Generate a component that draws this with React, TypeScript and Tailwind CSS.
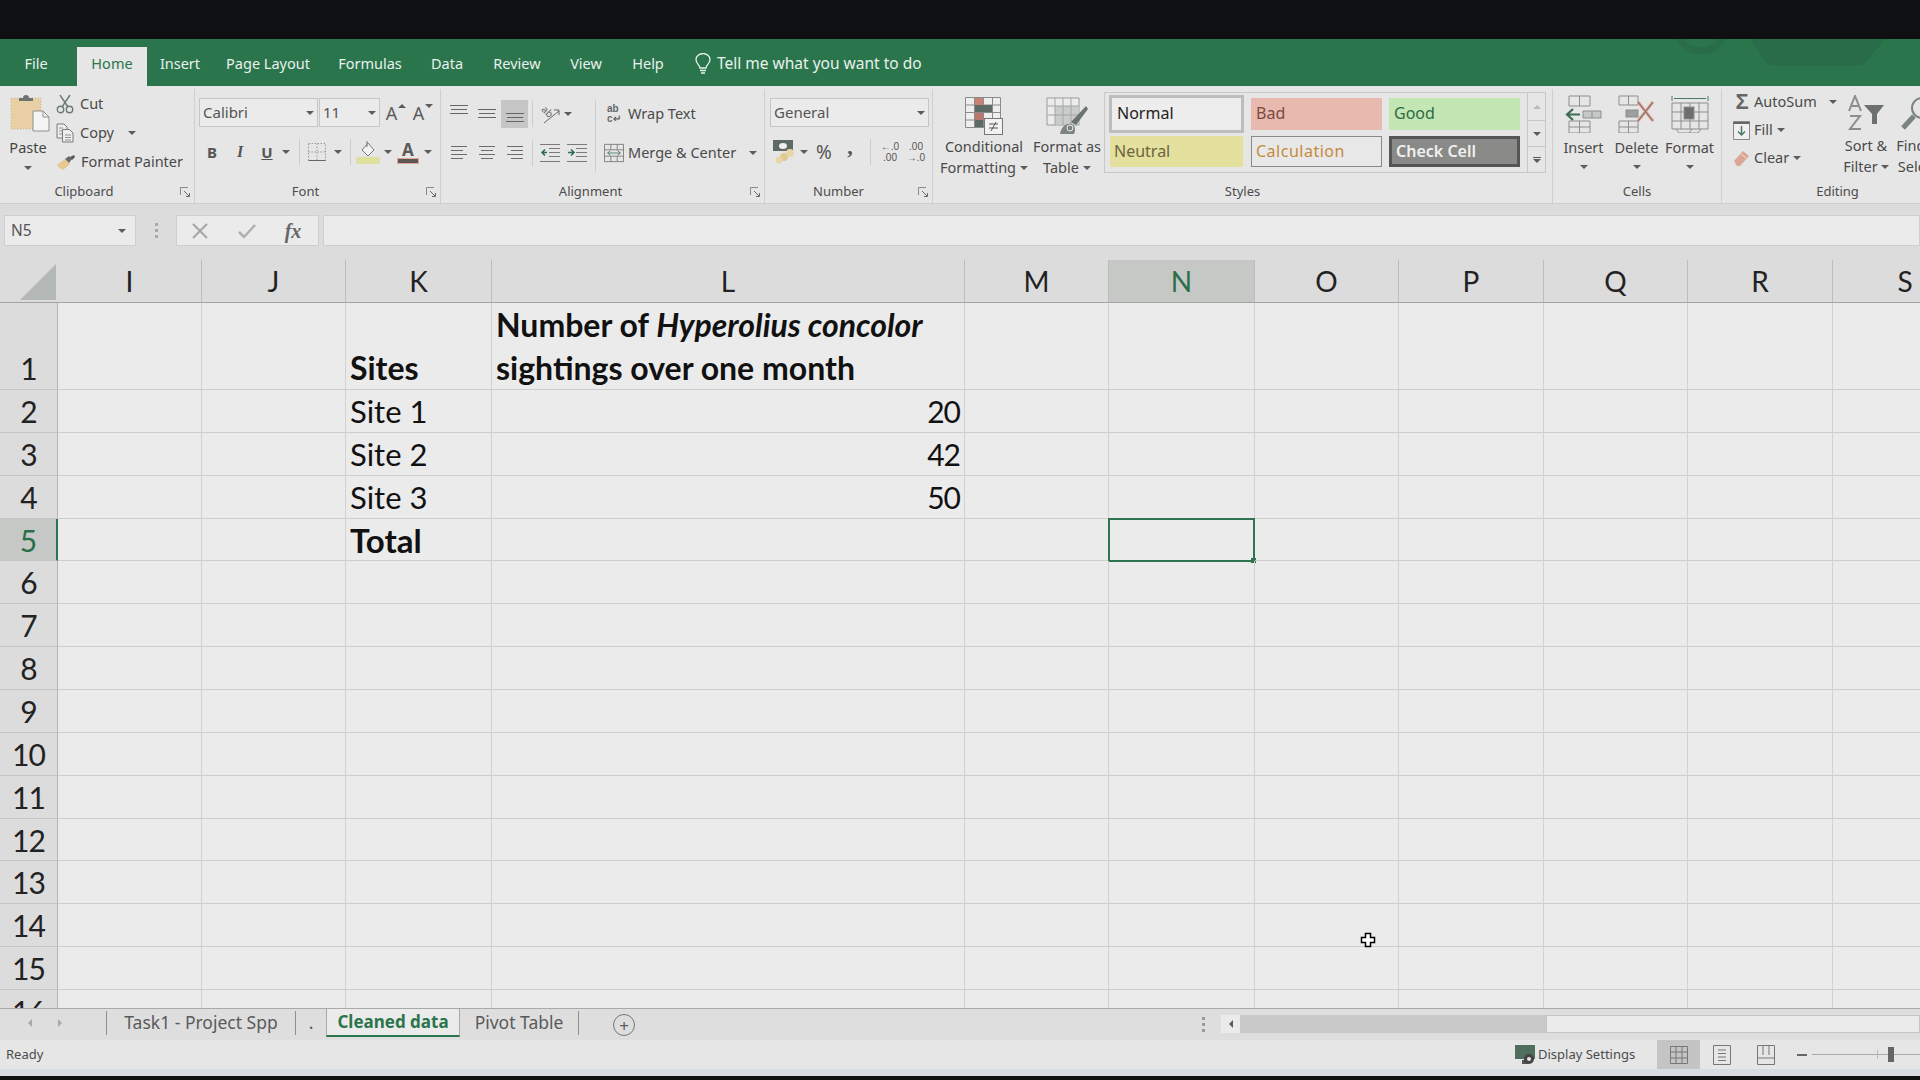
import { ReactNode } from "react";

const COLS = ["I", "J", "K", "L", "M", "N", "O", "P", "Q", "R", "S"];
const ROWS = Array.from({ length: 16 }, (_, i) => i + 1);
const TABS = [
  { name: "File", cls: "w-[77px] pr-[5px]" },
  { name: "Home", cls: "w-[70px]" },
  { name: "Insert", cls: "w-[66px]" },
  { name: "Page Layout", cls: "w-[110px]" },
  { name: "Formulas", cls: "w-[94px]" },
  { name: "Data", cls: "w-[60px]" },
  { name: "Review", cls: "w-[80px]" },
  { name: "View", cls: "w-[58px]" },
  { name: "Help", cls: "w-[66px]" },
];

function Caret({ className = "" }: { className?: string }) {
  return (
    <svg width="8" height="4" viewBox="0 0 8 4" className={className}>
      <path d="M0 0h8L4 4z" fill="#5c5c5c" />
    </svg>
  );
}

function Launcher() {
  return (
    <svg width="11" height="11" viewBox="0 0 11 11" fill="none" stroke="#8a8a8a" strokeWidth="1">
      <path d="M.5 8V.5H8" />
      <path d="M4 4l5 5M6 9.5h3.5V6" stroke="#6a6a6a" />
    </svg>
  );
}

function Sep({ className = "bg-[#cdcdcd]" }: { className?: string }) {
  return <div className={`h-[26px] w-px ${className}`} />;
}

function TabSep() {
  return <div className="mt-[2px] h-[24px] w-px bg-[#8f8f8f]" />;
}

function Group({ label, className, launcher, children }: { label: string; className: string; launcher?: string; children: ReactNode }) {
  return (
    <div className={`flex shrink-0 flex-col border-r border-[#cfcfcf] ${className}`}>
      <div className="h-[93px]">{children}</div>
      <div className="flex h-[20px] items-center text-[13px] text-[#4c4c4c]">
        <span className="flex-1 text-center">{label}</span>
        {launcher && (
          <div className={`flex justify-end pr-[3px] ${launcher}`}>
            <Launcher />
          </div>
        )}
      </div>
    </div>
  );
}

function PasteIcon() {
  return (
    <svg width="40" height="38" viewBox="0 0 40 38">
      <rect x="1" y="4" width="30" height="31" fill="#e8cfa4" stroke="#c9b68f" strokeDasharray="1 2" />
      <path d="M9 7V4h4a3 3 0 0 1 6 0h4v3z" fill="#6f7272" />
      <path d="M23 17h10l6 6v14H23z" fill="#f4f4f4" stroke="#8f8f8f" />
      <path d="M33 17v6h6" fill="none" stroke="#8f8f8f" />
    </svg>
  );
}

function ScissorsIcon() {
  return (
    <svg width="18" height="20" viewBox="0 0 18 20" fill="none" stroke="#6b7a72" strokeWidth="1.4">
      <path d="M4 1l8 12M14 1L6 13" />
      <circle cx="4.5" cy="15.5" r="3.2" />
      <circle cx="13.5" cy="15.5" r="3.2" />
    </svg>
  );
}

function CopyIcon() {
  return (
    <svg width="18" height="20" viewBox="0 0 18 20" fill="#eeeeee" stroke="#7a7a7a">
      <path d="M1 1h7l3 3v11H1z" />
      <path d="M6.5 6.5h7l3.5 3.5v9H6.500z" />
      <path d="M3 5h4M3 8h3M3 11h3M9 12h6M9 14.500h6M9 17h6" fill="none" strokeWidth=".8" />
    </svg>
  );
}

function BrushIcon() {
  return (
    <svg width="20" height="17" viewBox="0 0 20 17">
      <path d="M1 11l8-6 5 5-7 6-2-2-1 1z" fill="#e6c88e" />
      <path d="M9 5l4-3 3 3-3 4z" fill="#6a6a6a" />
      <path d="M14 3l4-2 1 2-3 3z" fill="#555" />
    </svg>
  );
}

function AlignLines({ align }: { align: "l" | "c" | "r" }) {
  const widths = [16, 12, 16, 12];
  return (
    <svg width="18" height="14" viewBox="0 0 18 14" stroke="#6c6c6c" strokeWidth="1">
      {widths.map((w, i) => {
        const x = align === "l" ? 1 : align === "r" ? 17 - w : 9 - w / 2;
        return <line key={i} x1={x} x2={x + w} y1={i * 4 + 0.5} y2={i * 4 + 0.5} />;
      })}
    </svg>
  );
}

function VAlign({ y }: { y: number }) {
  return (
    <svg width="20" height="22" viewBox="0 0 20 22" stroke="#666" strokeWidth="1">
      {[0, 1, 2].map((i) => (
        <line key={i} x1={i === 1 ? 2 : 1} x2={i === 1 ? 18 : 19} y1={y + i * 4 + 0.5} y2={y + i * 4 + 0.5} />
      ))}
    </svg>
  );
}

function Indent({ right }: { right?: boolean }) {
  return (
    <svg width="20" height="20" viewBox="0 0 20 20" fill="none" stroke="#7a7a7a">
      <path d="M0 1.500h20M9 5.500h11M9 9.500h11M9 13.500h11M0 18.500h20" />
      {right ? (
        <path d="M1 9.500h5M4 6.500l3 3-3 3" stroke="#2f6f4f" strokeWidth="1.6" />
      ) : (
        <path d="M7 9.500H2M5 6.500l-3 3 3 3" stroke="#2f6f4f" strokeWidth="1.6" />
      )}
    </svg>
  );
}

function CondIcon() {
  return (
    <svg width="38" height="38" viewBox="0 0 38 38">
      <path d="M.5.5h35v30H.5zM.5 8h35M.5 15.500h35M.5 23h20M9.500.5v30M18.500.5v30M27.500.5v22" fill="#eeeeee" stroke="#8b8b8b" />
      <rect x="10" y="1" width="8" height="7" fill="#c97f74" />
      <rect x="10" y="8" width="17" height="7" fill="#5d6b64" />
      <rect x="10" y="16" width="8" height="7" fill="#b9776c" />
      <rect x="10" y="23" width="8" height="7" fill="#5d6b64" />
      <rect x="19.500" y="21.500" width="18" height="16" fill="#f2f2f2" stroke="#777" />
      <path d="M24 27h9M24 31h9M31 25l-5 9" stroke="#555" fill="none" />
    </svg>
  );
}

function TableIcon() {
  return (
    <svg width="42" height="38" viewBox="0 0 42 38">
      <path d="M1 1h32v27H1z" fill="#ececec" stroke="#9a9a9a" />
      <rect x="9" y="9" width="24" height="18" fill="#c9cccb" />
      <path d="M9 1v27M17 1v27M25 1v27M1 9h32M1 18h32" stroke="#a5a5a5" fill="none" />
      <path d="M40 9l2 3-12 16-5-3z" fill="#6b7370" />
      <path d="M14 37c1-7 6-11 11-10 4 1 5 5 3 10z" fill="#7d8582" />
      <circle cx="24" cy="31" r="3" fill="none" stroke="#eee" />
    </svg>
  );
}

function InsertIcon() {
  return (
    <svg width="38" height="38" viewBox="0 0 38 38" fill="none" stroke="#8d8d8d">
      <path d="M4 1h21v10H4zM14.500 1v10M4 26h21v12H4zM4 32h21M14.500 26v12" />
      <path d="M18 16h18v7H18zM27 16v7" fill="#c4c8c6" />
      <path d="M15 19.500H2M8 14l-6 5.500L8 25" stroke="#3d6e55" strokeWidth="2.200" />
    </svg>
  );
}

function DeleteIcon() {
  return (
    <svg width="38" height="38" viewBox="0 0 38 38" fill="none" stroke="#8d8d8d">
      <path d="M1 1h19v9H1zM10.500 1v9M1 26h19v12H1zM1 32h19M10.500 26v12" />
      <rect x="8" y="15" width="12" height="7" fill="#9aa09d" />
      <path d="M20 7l15 19M35 7L20 26" stroke="#e0a294" strokeWidth="3" />
      <path d="M20 7l15 19M35 7L20 26" stroke="#666" strokeWidth="1" />
    </svg>
  );
}

function FormatIcon() {
  return (
    <svg width="38" height="38" viewBox="0 0 38 38" fill="none" stroke="#8d8d8d">
      <path d="M1 1v5M37 1v5M3 3.500h32" stroke="#4d7a63" />
      <path d="M1 8h36v26H1zM1 17h36M1 26h36M10 8v26M28 8v26M19 8v26" />
      <rect x="13" y="12" width="10" height="12" fill="#6c6f6e" />
      <path d="M5 34l3 4h10l3-4M18 38h9l3-4" />
    </svg>
  );
}

function SortIcon() {
  return (
    <svg width="38" height="36" viewBox="0 0 38 36" fill="none">
      <path d="M2 16L8 1l6 15M4 11h8" stroke="#8d8d8d" strokeWidth="2" />
      <path d="M3 21h10L3 34h11" stroke="#8d8d8d" strokeWidth="2" />
      <path d="M17 10h20l-7 9v10h-5V19z" fill="#6c716e" />
    </svg>
  );
}

function Cursor() {
  return (
    <svg width="16" height="16" viewBox="0 0 16 16" className="absolute left-[1360px] top-[932px]">
      <path d="M5.500 1.500h5v4h4v5h-4v4h-5v-4h-4v-5h4z" fill="#fff" stroke="#000" strokeWidth="1.500" />
    </svg>
  );
}

function StyleCell({ className, children }: { className: string; children: string }) {
  return <div className={`flex items-center pb-[2px] text-[16px] ${className}`}>{children}</div>;
}

function Ribbon() {
  return (
    <div className="flex h-[117px] shrink-0 overflow-hidden bg-[#e6e6e6] pt-[3px]">
      <Group label="Clipboard" launcher="w-[26px]" className="w-[195px]">
        <div className="flex">
          <div className="flex w-[56px] flex-col items-center pt-[5px]">
            <div className="pl-[3px]"><PasteIcon /></div>
            <span className="mt-[6px] text-[14.5px] leading-[18px] text-[#444]">Paste</span>
            <Caret className="mt-[10px]" />
          </div>
          <div className="flex flex-col text-[14.5px] text-[#4a4a4a]">
            <div className="flex h-[29px] items-center gap-[6px]"><ScissorsIcon /><span>Cut</span></div>
            <div className="flex h-[29px] items-center gap-[6px]"><CopyIcon /><span>Copy</span><Caret className="ml-[8px]" /></div>
            <div className="flex h-[30px] items-center gap-[5px]"><BrushIcon /><span>Format Painter</span></div>
          </div>
        </div>
      </Group>

      <Group label="Font" launcher="w-[24px]" className="w-[246px]">
        <div className="flex flex-col pl-[4px] pt-[9px]">
          <div className="flex h-[29px] items-center">
            <div className="flex h-full w-[119px] items-center justify-between border border-[#c6c6c6] bg-[#ebebeb] pl-[3px] pr-[3px] text-[15px] text-[#555]">Calibri<Caret /></div>
            <div className="ml-px flex h-full w-[61px] items-center justify-between border border-[#c6c6c6] bg-[#ebebeb] pl-[3px] pr-[3px] text-[15px] text-[#555]">11<Caret /></div>
            <div className="ml-[2px] flex w-[28px] justify-center gap-[1px] text-[18px] leading-[20px] text-[#5c5c5c]">A<Caret className="mt-[1px] rotate-180" /></div>
            <div className="flex w-[26px] justify-center gap-[1px] text-[18px] leading-[20px] text-[#5c5c5c]">A<Caret className="mt-[1px]" /></div>
          </div>
          <div className="mt-[10px] flex h-[30px] items-center text-[#555]">
            <span className="w-[26px] text-center text-[15px] font-bold">B</span>
            <span className="w-[30px] text-center font-['Liberation_Serif'] text-[16px] font-bold italic">I</span>
            <span className="w-[24px] text-center text-[15px] font-bold underline">U</span>
            <div className="flex w-[14px] justify-center"><Caret /></div>
            <div className="flex w-[12px] justify-center"><Sep /></div>
            <div className="flex w-[24px] justify-center">
              <svg width="18" height="18" viewBox="0 0 18 18" fill="none" stroke="#9a9a9a" strokeDasharray="1.500 1.500"><path d="M.5.5h17v17H.5zM9 .5v17M.5 9h17" /><path d="M.5 17.500h17" stroke="#666" strokeDasharray="none" /></svg>
            </div>
            <div className="flex w-[18px] justify-center"><Caret /></div>
            <div className="flex w-[6px] justify-center"><Sep /></div>
            <div className="flex w-[30px] justify-center">
              <svg width="24" height="24" viewBox="0 0 24 24"><path d="M12 3l6 7-6 6-6-6z" fill="#f2f2f2" stroke="#777" /><path d="M11 1v6" stroke="#777" /><rect x="0" y="17" width="24" height="7" rx="3" fill="#dfe09d" /></svg>
            </div>
            <div className="flex w-[10px] justify-center"><Caret /></div>
            <div className="flex w-[30px] flex-col items-center">
              <span className="text-[17px] font-bold leading-[17px] text-[#5a5a5a]">A</span>
              <div className="h-[6px] w-[22px] border border-[#e2a697] bg-[#5c5654]" />
            </div>
            <div className="flex w-[10px] justify-center"><Caret /></div>
          </div>
        </div>
      </Group>

      <Group label="Alignment" launcher="w-[24px]" className="w-[324px]">
        <div className="flex pl-[4px] pt-[11px]">
          <div className="flex w-[150px] flex-col">
            <div className="flex h-[28px] items-center">
              <div className="flex w-[28px] justify-center"><VAlign y={2} /></div>
              <div className="flex w-[28px] justify-center"><VAlign y={6} /></div>
              <div className="flex h-[28px] w-[27px] items-center justify-center bg-[#c6c6c6]"><VAlign y={10} /></div>
              <div className="flex w-[8px] justify-center"><Sep /></div>
              <div className="flex w-[28px] justify-center">
                <svg width="22" height="22" viewBox="0 0 22 22" fill="none" stroke="#666"><text x="8" y="12" textAnchor="middle" fontSize="10" fill="#666" stroke="none" transform="rotate(45 8 9)" fontFamily="Noto Sans">ab</text><path d="M5 20L20 8M15 7h5v5" /></svg>
              </div>
              <Caret />
            </div>
            <div className="mt-[11px] flex h-[28px] items-center">
              <div className="flex w-[28px] justify-center"><AlignLines align="l" /></div>
              <div className="flex w-[28px] justify-center"><AlignLines align="c" /></div>
              <div className="flex w-[27px] justify-center"><AlignLines align="r" /></div>
              <div className="flex w-[8px] justify-center"><Sep /></div>
              <div className="flex w-[28px] justify-center"><Indent /></div>
              <div className="flex w-[26px] justify-center"><Indent right /></div>
            </div>
          </div>
          <div className="h-[72px] w-px bg-[#cdcdcd]" />
          <div className="flex flex-col pl-[8px] text-[14.5px] text-[#4a4a4a]">
            <div className="flex h-[28px] items-center gap-[4px]">
              <span className="flex w-[20px] flex-col pl-[3px] font-['Liberation_Sans'] text-[10px] font-bold leading-[10px] text-[#666]"><span>ab</span><span>c↵</span></span>
              <span>Wrap Text</span>
            </div>
            <div className="mt-[11px] flex h-[28px] items-center gap-[4px]">
              <svg width="20" height="22" viewBox="0 0 22 22" fill="none" stroke="#7a7a7a"><path d="M.5 1.500h21v19H.5zM.5 7.500h21M.5 14.500h21M7.500 1.500v6M14.500 1.500v6M7.500 14.500v6M14.500 14.500v6" /><path d="M4 11h14M7 8.500L4 11l3 2.500M15 8.500l3 2.500-3 2.500" stroke="#4d7a63" /></svg>
              <span>Merge &amp; Center</span>
              <Caret className="ml-[9px]" />
            </div>
          </div>
        </div>
      </Group>

      <Group label="Number" launcher="w-[20px]" className="w-[168px]">
        <div className="flex flex-col pl-[5px] pt-[9px]">
          <div className="flex h-[29px] w-[159px] items-center justify-between border border-[#c6c6c6] bg-[#ebebeb] pl-[3px] pr-[3px] text-[15px] text-[#555]">General<Caret /></div>
          <div className="mt-[10px] flex h-[30px] items-center text-[#555]">
            <div className="flex w-[28px] justify-center">
              <svg width="22" height="24" viewBox="0 0 22 24"><rect x="0" y="0" width="20" height="11" fill="#5d6b64" /><ellipse cx="10" cy="6" rx="4" ry="3" fill="#f0f0f0" /><circle cx="11" cy="17" r="4" fill="#e0c991" /><circle cx="17" cy="13" r="4" fill="#e8d6a8" /><circle cx="6" cy="20" r="3.500" fill="#e8d6a8" /></svg>
            </div>
            <div className="flex w-[12px] justify-center"><Caret /></div>
            <span className="w-[28px] text-center text-[19px]">%</span>
            <span className="w-[24px] pb-[10px] text-center font-['Liberation_Serif'] text-[22px] font-bold leading-[22px]">,</span>
            <div className="flex w-[16px] justify-center"><Sep /></div>
            <div className="flex w-[24px] flex-col text-center font-['Liberation_Sans'] text-[10px] leading-[11px]"><span>←.0</span><span>.00</span></div>
            <div className="flex w-[28px] flex-col text-center font-['Liberation_Sans'] text-[10px] leading-[11px]"><span>.00</span><span>→.0</span></div>
          </div>
        </div>
      </Group>

      <Group label="Styles" className="w-[620px]">
        <div className="flex pl-[5px] pt-[3px]">
          <div className="flex w-[92px] flex-col items-center pt-[5px] text-[14.5px] leading-[21px] text-[#4a4a4a]">
            <CondIcon />
            <span className="mt-px">Conditional</span>
            <span className="flex items-center gap-[4px]">Formatting<Caret /></span>
          </div>
          <div className="flex w-[74px] flex-col items-center pt-[5px] text-[14.5px] leading-[21px] text-[#4a4a4a]">
            <TableIcon />
            <span className="mt-px">Format as</span>
            <span className="flex items-center gap-[4px]">Table<Caret /></span>
          </div>
          <div className="flex h-[81px] w-[442px] border border-[#c8c8c8] pl-[4px]">
            <div className="grid w-[411px] shrink-0 grid-cols-[135px_131px_131px] grid-rows-[38px_31px] gap-x-[7px] gap-y-[3px] py-[2px]">
              <StyleCell className="border-[3px] border-[#bdbdbd] bg-[#ededed] pl-[5px] text-[#222]">Normal</StyleCell>
              <StyleCell className="my-[3px] bg-[#e8b9ae] pl-[5px] text-[#7a4a40]">Bad</StyleCell>
              <StyleCell className="my-[3px] bg-[#c3e6b4] pl-[5px] text-[#2f6a40]">Good</StyleCell>
              <StyleCell className="mx-px bg-[#e4e09e] pl-[4px] text-[#6d6440]">Neutral</StyleCell>
              <StyleCell className="border border-[#8a8a8a] bg-[#e8e8e8] pl-[4px] text-[#c48a3a] tracking-[0.5px]">Calculation</StyleCell>
              <StyleCell className="border-[3px] border-[#555] bg-[#8a8a88] pl-[4px] font-semibold text-[#f0f0f0]">Check Cell</StyleCell>
            </div>
            <div className="ml-[7px] flex w-[18px] flex-col border-l border-[#c8c8c8]">
              <div className="flex h-[28px] items-center justify-center border-b border-[#c8c8c8]"><Caret className="rotate-180 opacity-30" /></div>
              <div className="flex h-[26px] items-center justify-center border-b border-[#c8c8c8]"><Caret /></div>
              <div className="flex flex-1 flex-col items-center justify-center gap-[1px]"><div className="h-px w-[8px] bg-[#5c5c5c]" /><Caret /></div>
            </div>
          </div>
        </div>
      </Group>

      <Group label="Cells" className="w-[169px]">
        <div className="flex pl-[4px] pt-[6px] text-[14.5px] text-[#4a4a4a]">
          {[
            { name: "Insert", icon: <InsertIcon /> },
            { name: "Delete", icon: <DeleteIcon /> },
            { name: "Format", icon: <FormatIcon /> },
          ].map((b) => (
            <div key={b.name} className="flex w-[53px] flex-col items-center">
              {b.icon}
              <span className="mt-[4px] leading-[20px]">{b.name}</span>
              <Caret className="mt-[8px]" />
            </div>
          ))}
        </div>
      </Group>

      <Group label="Editing" className="w-[232px]">
        <div className="flex pl-[11px] text-[14.5px] text-[#4a4a4a]">
          <div className="-mt-px flex w-[107px] flex-col">
            <div className="flex h-[28px] items-center gap-[3px]"><span className="w-[18px] text-center font-['Liberation_Sans'] text-[22px] font-bold leading-[22px] text-[#666]">Σ</span><span>AutoSum</span><Caret className="ml-[9px]" /></div>
            <div className="flex h-[28px] items-center gap-[4px]">
              <svg width="17" height="19" viewBox="0 0 17 19" fill="#efefef" stroke="#888"><path d="M.5.5h16v18H.5z" /><path d="M.5 2h16" strokeWidth="2" stroke="#666" /><path d="M8.500 5v9M5 10.500l3.500 3.500 3.500-3.500" fill="none" stroke="#4d7a63" strokeWidth="1.500" /></svg>
              <span>Fill</span><Caret />
            </div>
            <div className="flex h-[28px] items-center gap-[4px]">
              <svg width="17" height="17" viewBox="0 0 17 17"><path d="M1 11l9-10 6 5-9 10H4z" fill="#dba597" /><path d="M8 4l5 4" stroke="#f4e0d8" /></svg>
              <span>Clear</span><Caret />
            </div>
          </div>
          <div className="flex w-[52px] flex-col items-center pt-[6px]">
            <SortIcon />
            <span className="mt-[4px] leading-[21px]">Sort &amp;</span>
            <span className="flex items-center gap-[3px] leading-[21px]">Filter<Caret /></span>
          </div>
          <div className="flex w-[52px] flex-col items-center pt-[6px]">
            <svg width="36" height="36" viewBox="0 0 36 36" fill="none" stroke="#7a8580"><circle cx="22" cy="13" r="10" strokeWidth="2" /><path d="M14 21L3 33" strokeWidth="5" /></svg>
            <span className="mt-[4px] leading-[21px]">Find &amp;</span>
            <span className="leading-[21px]">Select</span>
          </div>
        </div>
      </Group>
    </div>
  );
}

function Grid() {
  return (
    <div className="h-[749px] shrink-0 overflow-hidden border-b border-[#a9a9a9] bg-[#ebebeb] font-['Lato',sans-serif] text-[28px]">
      <div className="grid grid-cols-[58px_144px_144px_146px_473px_144px_146px_144px_145px_144px_145px_145px] grid-rows-[43px_87px_repeat(14,42.86px)_19px]">
        <div className="flex items-end justify-end border-b border-[#a3a3a3] bg-[#dcdcdc] pb-[2px] pr-[2px]">
          <div className="h-0 w-0 border-b-[36px] border-l-[36px] border-b-[#b4b8b6] border-l-transparent" />
        </div>
        {COLS.map((c) => (
          <div key={c} className={`flex items-center justify-center border-b border-r border-b-[#a3a3a3] border-r-[#bdbdbd] ${c === "N" ? "bg-[#c6c8c6] text-[#2a6f49]" : "bg-[#dcdcdc] text-[#222]"}`}>{c}</div>
        ))}
        {ROWS.map((r) => (
          <Row key={r} r={r} />
        ))}
      </div>
    </div>
  );
}

function Row({ r }: { r: number }) {
  const content = (c: string) => {
    if (c === "K") {
      if (r === 1) return <div className="flex h-full items-end pl-[4px] text-[32px] font-bold leading-[43px]">Sites</div>;
      if (r >= 2 && r <= 4) return <div className="pl-[4px] text-[31px] leading-[42px]">Site {r - 1}</div>;
      if (r === 5) return <div className="pl-[4px] text-[33px] font-bold leading-[42px]">Total</div>;
    }
    if (c === "L") {
      if (r === 1)
        return (
          <div className="pl-[4px] text-[32px] font-bold leading-[43px]">
            Number of <em>Hyperolius concolor</em>
            <br />
            sightings over one month
          </div>
        );
      if (r >= 2 && r <= 4) return <div className="pr-[4px] text-right text-[30px] leading-[42px] tracking-[-1px]">{[20, 42, 50][r - 2]}</div>;
    }
    if (c === "N" && r === 5)
      return (
        <div className="absolute -bottom-[2px] -left-px -right-px -top-px border-2 border-[#2f7350]">
          <div className="absolute -bottom-[3px] -right-[3px] h-[5px] w-[5px] bg-[#2f7350]" />
        </div>
      );
    return null;
  };
  return (
    <>
      <div className={`flex justify-center overflow-hidden border-b border-[#c4c4c4] text-[30px] leading-[42px] tracking-[-1px] ${r === 1 ? "items-end" : "items-start"} ${r === 5 ? "border-r-2 border-r-[#2f7350] bg-[#c6c8c6] text-[#2a6f49]" : "border-r border-r-[#b5b5b5] bg-[#dcdcdc] text-[#222]"}`}>{r}</div>
      {COLS.map((c) => (
        <div key={c} className="relative border-b border-r border-b-[#cdcdcd] border-r-[#d2d2d2] text-[#111]">{content(c)}</div>
      ))}
    </>
  );
}

export default function App() {
  return (
    <div className="relative flex h-screen w-screen flex-col overflow-hidden bg-[#0f1012] font-['Noto_Sans',sans-serif]">
      <div className="h-[39px] shrink-0" />

      {/* title ribbon tabs */}
      <div className="relative flex h-[47px] shrink-0 items-end overflow-hidden bg-[#2b754d] text-[14.5px] text-[#e9f1ec]">
        <svg width="300" height="30" viewBox="0 0 300 30" fill="none" className="absolute right-0 top-0" stroke="#296c49" strokeWidth="7">
          <path d="M58 -6c6 24 40 24 46 0" />
          <path d="M128 -4l16 24c3 5 6 6 10 6h84c5 0 7-2 10-6l20-24z" fill="#296c49" strokeWidth="1" />
        </svg>
        {TABS.map((t) => (
          <div key={t.name} className={`relative flex h-[39px] items-center justify-center pb-[5px] ${t.cls} ${t.name === "Home" ? "bg-[#e6e6e6] text-[#2b754d]" : ""}`}>
            {t.name}
          </div>
        ))}
        <div className="relative flex h-[39px] items-center gap-[5px] pb-[5px] pl-[13px]">
          <svg width="18" height="22" viewBox="0 0 18 22" fill="none" stroke="#e9f1ec" strokeWidth="1.300">
            <path d="M6 15c0-3-4-4-4-8.500a7 6 0 0 1 14 0C16 11 12 12 12 15zM6 17.500h6M7 20h4" />
          </svg>
          <span className="text-[15.5px]">Tell me what you want to do</span>
        </div>
      </div>

      <Ribbon />

      {/* formula bar */}
      <div className="flex h-[57px] shrink-0 items-start gap-[4px] border-t border-[#cfcfcf] bg-[#dcdcdc] pl-[4px] pt-[11px] text-[15.5px] text-[#555]">
        <div className="flex h-[31px] w-[132px] items-center justify-between border border-[#cfcfcf] bg-[#ebebeb] px-[6px] pr-[9px]">N5<Caret /></div>
        <div className="flex h-[31px] w-[32px] flex-col items-center justify-center gap-[3px]">
          <div className="h-[3px] w-[3px] bg-[#aaa]" />
          <div className="h-[3px] w-[3px] bg-[#aaa]" />
          <div className="h-[3px] w-[3px] bg-[#aaa]" />
        </div>
        <div className="flex h-[31px] w-[143px] items-center border border-[#cfcfcf] bg-[#ebebeb]">
          <div className="flex w-[46px] justify-center">
            <svg width="16" height="16" viewBox="0 0 16 16" stroke="#a5a5a5" strokeWidth="2"><path d="M1 1l14 14M15 1L1 15" /></svg>
          </div>
          <div className="flex w-[48px] justify-center">
            <svg width="18" height="16" viewBox="0 0 18 16" fill="none" stroke="#b0b0b0" strokeWidth="2.500"><path d="M1 9l5 5L17 2" /></svg>
          </div>
          <span className="w-[44px] text-center font-['Liberation_Serif'] text-[20px] font-bold italic text-[#666]">fx</span>
        </div>
        <div className="h-[31px] flex-1 border border-[#cfcfcf] bg-[#ebebeb]" />
      </div>

      <Grid />

      {/* sheet tabs */}
      <div className="flex h-[31px] shrink-0 items-start bg-[#dedede] text-[17.5px] text-[#5a5a5a]">
        <div className="flex h-[28px] w-[106px] items-center gap-[22px] pl-[26px]">
          <Caret className="rotate-90 opacity-40" />
          <Caret className="-rotate-90 opacity-40" />
        </div>
        <TabSep />
        <div className="w-[188px] text-center leading-[26px]">Task1 - Project Spp</div>
        <TabSep />
        <div className="w-[30px] text-center leading-[26px]">.</div>
        <div className="h-[28px] w-[134px] border-x border-b-[2px] border-x-[#a9a9a9] border-b-[#2b754d] bg-[#ebebeb] text-center text-[17px] font-bold leading-[26px] text-[#2b754d]">Cleaned data</div>
        <div className="w-[118px] text-center leading-[26px]">Pivot Table</div>
        <TabSep />
        <div className="ml-[34px] mt-[5px] flex h-[22px] w-[22px] items-center justify-center rounded-full border border-[#777] text-[17px] leading-none">+</div>
        <div className="ml-[561px] mt-[5px] flex h-[20px] w-[14px] flex-col items-center justify-center gap-[3px]">
          <div className="h-[3px] w-[3px] bg-[#999]" />
          <div className="h-[3px] w-[3px] bg-[#999]" />
          <div className="h-[3px] w-[3px] bg-[#999]" />
        </div>
        <div className="ml-[11px] mt-[6px] flex h-[18px] w-[19px] items-center justify-center bg-[#ebebeb]"><Caret className="rotate-90" /></div>
        <div className="mt-[6px] h-[18px] w-[306px] bg-[#c9c9c9]" />
        <div className="mt-[6px] h-[18px] flex-1 border border-[#c4c4c4] bg-[#ebebeb]" />
      </div>

      {/* status bar */}
      <div className="flex h-[29px] shrink-0 items-center bg-[#e6e6e6] pl-[6px] text-[13px] text-[#4c4c4c]">
        <span>Ready</span>
        <div className="ml-auto flex h-full items-center">
          <svg width="21" height="20" viewBox="0 0 21 20" className="mr-[2px]"><rect x="0" y="0" width="20" height="14" fill="#4f6e5c" /><rect x="7" y="15" width="6" height="4" fill="#555" /><circle cx="14" cy="14" r="5" fill="#444" /><circle cx="14" cy="14" r="2" fill="#e6e6e6" /></svg>
          <span className="w-[119px]">Display Settings</span>
          <div className="flex h-full w-[43px] items-center justify-center bg-[#c4c4c4]">
            <svg width="18" height="18" viewBox="0 0 18 18" fill="none" stroke="#777"><path d="M.5.5h17v17H.5zM6 .5v17M12 .5v17M.5 6h17M.5 12h17" /></svg>
          </div>
          <div className="flex w-[44px] justify-center">
            <svg width="18" height="20" viewBox="0 0 18 20" fill="none" stroke="#777"><path d="M.5.5h17v19H.5zM5 5h8M5 8.500h8M5 12h8M5 15.500h8" /></svg>
          </div>
          <div className="flex w-[44px] justify-center">
            <svg width="18" height="20" viewBox="0 0 18 20" fill="none" stroke="#777"><path d="M.5.5h17v19H.5zM.5 13h17M6 .5V10M12 .5V10" /></svg>
          </div>
          <div className="ml-[9px] h-[2px] w-[10px] bg-[#666]" />
          <div className="relative ml-[5px] h-px w-[108px] bg-[#aaa]">
            <div className="absolute -top-[4px] left-[65px] h-[9px] w-px bg-[#bbb]" />
            <div className="absolute -top-[7px] left-[76px] h-[15px] w-[6px] bg-[#666]" />
          </div>
        </div>
      </div>
      <div className="h-[7px] shrink-0 bg-[#d9dce0]" />
      <Cursor />
    </div>
  );
}
